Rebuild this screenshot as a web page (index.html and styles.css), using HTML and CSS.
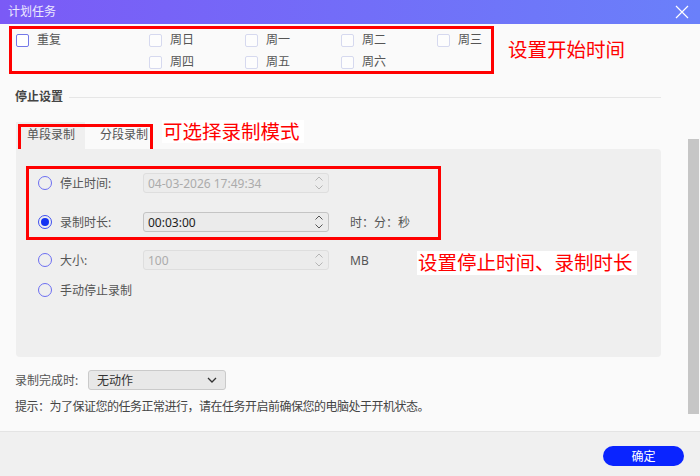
FILE: index.html
```html
<!DOCTYPE html>
<html lang="zh-CN">
<head>
    <meta charset="UTF-8">
    <title>计划任务</title>
    <link rel="stylesheet" href="styles.css">
</head>
<body>
    <div class="window">
        <div class="titlebar">
            <span class="title">计划任务</span>
            <svg class="close" width="14" height="14" viewBox="0 0 14 14">
                <path d="M1 1L13 13M13 1L1 13" stroke="#fff" stroke-width="1.2" fill="none"/>
            </svg>
        </div>

        <div class="main">
            <div class="content">
                <div class="repeat-row">
                    <div class="repeat-box">
                        <label class="check repeat"><span class="box strong"></span>重复</label>
                        <div class="days">
                            <label class="check"><span class="box"></span>周日</label>
                            <label class="check"><span class="box"></span>周一</label>
                            <label class="check"><span class="box"></span>周二</label>
                            <label class="check"><span class="box"></span>周三</label>
                            <label class="check"><span class="box"></span>周四</label>
                            <label class="check"><span class="box"></span>周五</label>
                            <label class="check"><span class="box"></span>周六</label>
                        </div>
                    </div>
                    <span class="note">设置开始时间</span>
                </div>

                <div class="section-title">
                    <span>停止设置</span>
                    <i class="rule"></i>
                </div>

                <div class="tab-row">
                    <div class="tabs">
                        <span class="tab active">单段录制</span>
                        <span class="tab">分段录制</span>
                    </div>
                    <span class="note note-bg">可选择录制模式</span>
                </div>

                <div class="panel">
                    <div class="stop-box">
                        <div class="opt-row">
                            <span class="radio"></span>
                            <span class="opt-label">停止时间:</span>
                            <div class="spin disabled">
                                <span>04-03-2026 17:49:34</span>
                                <svg width="10" height="16" viewBox="0 0 10 16"><path d="M1.5 5.5L5 2L8.5 5.5M1.5 10.5L5 14L8.5 10.5" stroke="#b5b5b5" fill="none"/></svg>
                            </div>
                        </div>
                        <div class="opt-row">
                            <span class="radio checked"></span>
                            <span class="opt-label">录制时长:</span>
                            <div class="spin">
                                <span>00:03:00</span>
                                <svg width="10" height="16" viewBox="0 0 10 16"><path d="M1.5 5.5L5 2L8.5 5.5M1.5 10.5L5 14L8.5 10.5" stroke="#555" fill="none"/></svg>
                            </div>
                            <span class="unit">时：分：秒</span>
                        </div>
                    </div>
                    <div class="opt-row outside">
                        <span class="radio"></span>
                        <span class="opt-label">大小:</span>
                        <div class="spin disabled">
                            <span>100</span>
                            <svg width="10" height="16" viewBox="0 0 10 16"><path d="M1.5 5.5L5 2L8.5 5.5M1.5 10.5L5 14L8.5 10.5" stroke="#b5b5b5" fill="none"/></svg>
                        </div>
                        <span class="unit">MB</span>
                    </div>
                    <div class="opt-row outside">
                        <span class="radio"></span>
                        <span class="opt-label">手动停止录制</span>
                    </div>
                    <span class="note note-bg note-stop">设置停止时间、录制时长</span>
                </div>

                <div class="finish-row">
                    <span class="finish-label">录制完成时:</span>
                    <div class="select">
                        <span>无动作</span>
                        <svg width="10" height="6" viewBox="0 0 10 6"><path d="M1 1L5 5L9 1" stroke="#333" stroke-width="1.3" fill="none"/></svg>
                    </div>
                </div>
                <p class="hint">提示：为了保证您的任务正常进行，请在任务开启前确保您的电脑处于开机状态。</p>
            </div>

            <div class="scrollbar"><div class="thumb"></div></div>
        </div>

        <div class="footer">
            <button class="ok">确定</button>
        </div>
    </div>
</body>
</html>
```

FILE: styles.css
```css
* {
    box-sizing: border-box;
}
body {
    margin: 0;
    font-family: "Noto Sans", "Noto Sans CJK SC", sans-serif;
    font-size: 12px;
    color: #555;
    background-color: #fafafa;
}
.window {
    width: 700px;
    height: 476px;
    display: flex;
    flex-direction: column;
}

/* title bar */
.titlebar {
    height: 24px;
    flex: none;
    display: flex;
    align-items: center;
    justify-content: space-between;
    padding: 0 11px 0 8px;
    background: linear-gradient(90deg, #7b5af6, #6a80fa);
}
.title {
    color: #ece8ff;
    font-size: 12px;
    line-height: 16px;
}

/* scrolling body */
.main {
    flex: 1;
    display: flex;
    min-height: 0;
}
.content {
    flex: 1;
    padding: 0 27px 0 15px;
}
.scrollbar {
    width: 12px;
    padding-top: 115px;
}
.thumb {
    width: 11px;
    height: 275px;
    background-color: #c6c6c6;
}

/* red call-outs */
.note {
    color: #ff0000;
    font-size: 19.5px;
    line-height: 24px;
    white-space: nowrap;
}
.note-bg {
    background-color: #fff;
    padding: 0 4px 0 1px;
}

/* repeat days */
.repeat-row {
    display: flex;
    align-items: center;
    margin: 2px 0 0 -6px;
}
.repeat-box {
    flex: none;
    width: 485px;
    height: 48px;
    border: 3px solid #ff0000;
    padding: 4px 0 0 4px;
    display: flex;
}
.repeat-row .note {
    margin-left: 14px;
}
.check {
    display: flex;
    align-items: center;
    gap: 8px;
    height: 14px;
    line-height: 14px;
    white-space: nowrap;
}
.repeat {
    flex: none;
    width: 133px;
    align-self: flex-start;
}
.box {
    flex: none;
    width: 13px;
    height: 13px;
    border: 1px solid #d6d9ef;
    border-radius: 2px;
    background-color: #fdfdfd;
}
.box.strong {
    border: 1.5px solid #7478e8;
    background-color: #fff;
}
.days {
    display: grid;
    grid-template-columns: repeat(3, 96px) auto;
    row-gap: 6px;
}

/* stop settings */
.section-title {
    display: flex;
    align-items: center;
    margin-top: 15px;
    line-height: 16px;
    color: #444;
    font-weight: bold;
}
.rule {
    flex: 1;
    height: 1px;
    margin-left: 6px;
    background-color: #e6e6e6;
}
.tab-row {
    display: flex;
    align-items: flex-start;
    margin: 17px 0 0 1px;
}
.tabs {
    position: relative;
    display: flex;
    height: 27px;
}
.tabs::after {
    content: "";
    position: absolute;
    left: 2px;
    top: 2px;
    width: 129px;
    height: 23px;
    border: 3px solid #ff0000;
}
.tab {
    height: 27px;
    line-height: 26px;
    padding: 0 2px 0 15px;
    color: #555;
    white-space: nowrap;
}
.tab.active {
    background-color: #efefef;
    padding: 0 10px 0 11px;
}
.tab-row .note {
    margin: -2px 0 0 12px;
    line-height: 23px;
}

.panel {
    position: relative;
    height: 208px;
    margin-left: 1px;
    padding: 17px 0 0 10px;
    background-color: #efefef;
    border-radius: 0 4px 4px 4px;
}
.stop-box {
    width: 415px;
    height: 74px;
    border: 3px solid #ff0000;
    padding: 4px 0 0 9px;
    display: flex;
    flex-direction: column;
    gap: 19px;
}
.opt-row {
    display: flex;
    align-items: center;
    height: 20px;
}
.opt-row.outside {
    margin: 10px 0 0 12px;
}
.radio {
    width: 14px;
    height: 14px;
    border: 1.5px solid #6c6ef2;
    border-radius: 50%;
    margin-right: 8px;
    display: flex;
    align-items: center;
    justify-content: center;
}
.radio.checked {
    border-color: #3f4ff0;
}
.radio.checked::after {
    content: "";
    width: 8px;
    height: 8px;
    border-radius: 50%;
    background-color: #1532f2;
}
.opt-label {
    width: 83px;
    color: #555;
}
.spin {
    width: 186px;
    height: 20px;
    display: flex;
    align-items: center;
    justify-content: space-between;
    padding: 0 4px 0 4px;
    border: 1px solid #c4c4c4;
    border-radius: 3px;
    background-color: #ebebeb;
    color: #222;
}
.spin.disabled {
    border-color: #dedede;
    background-color: #ececec;
    color: #ababab;
}
.unit {
    margin-left: 21px;
    color: #555;
}
.note-stop {
    position: absolute;
    left: 401px;
    top: 102px;
}

/* after recording */
.finish-row {
    display: flex;
    align-items: center;
    margin-top: 13px;
}
.finish-label {
    width: 73px;
}
.select {
    width: 138px;
    height: 20px;
    display: flex;
    align-items: center;
    justify-content: space-between;
    padding: 0 8px 0 8px;
    border: 1px solid #cacaca;
    border-radius: 3px;
    background-color: #e8e8e8;
    color: #333;
}
.hint {
    margin: 9px 0 0;
    line-height: 16px;
    color: #444;
    letter-spacing: -0.5px;
}

/* footer */
.footer {
    height: 45px;
    flex: none;
    display: flex;
    justify-content: flex-end;
    align-items: center;
    padding: 4px 16px 0 0;
    border-top: 1px solid #e4e4e4;
    background-color: #f0f0f0;
}
.ok {
    width: 81px;
    height: 20px;
    border: none;
    border-radius: 10px;
    background-color: #0a24ff;
    color: #fff;
    font-family: inherit;
    font-size: 12px;
    padding: 0;
}
```
